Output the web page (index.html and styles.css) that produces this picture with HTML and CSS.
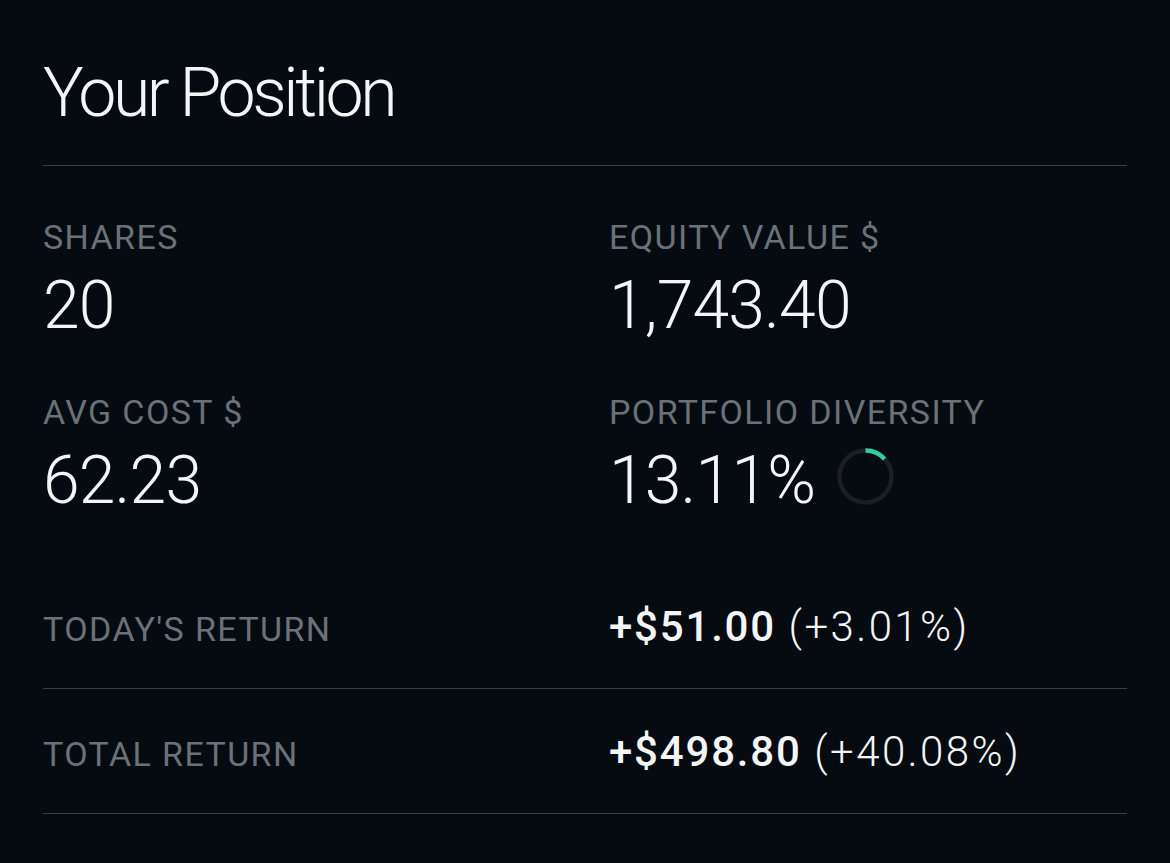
FILE: index.html
```html
<!DOCTYPE html>
<html lang="en">
<head>
<meta charset="utf-8">
<title>Your Position</title>
<link rel="stylesheet" href="styles.css">
</head>
<body>
<main class="position">
  <h1 class="title">Your Position</h1>
  <section class="stats">
    <div class="stat">
      <div class="label">SHARES</div>
      <div class="value">20</div>
    </div>
    <div class="stat">
      <div class="label">EQUITY VALUE $</div>
      <div class="value">1,743.40</div>
    </div>
    <div class="stat">
      <div class="label">AVG COST $</div>
      <div class="value">62.23</div>
    </div>
    <div class="stat">
      <div class="label">PORTFOLIO DIVERSITY</div>
      <div class="value value-ring">
        <span>13.11%</span>
        <svg class="ring" width="57" height="57" viewBox="0 0 57 57">
          <circle cx="28.5" cy="28.5" r="26" fill="none" stroke="#1b1e23" stroke-width="4.5"/>
          <circle cx="28.5" cy="28.5" r="26" fill="none" stroke="#2fcf9c" stroke-width="4.5"
            stroke-dasharray="21.4 200" transform="rotate(-90 28.5 28.5)"/>
        </svg>
      </div>
    </div>
  </section>
  <div class="return-row">
    <div class="label">TODAY'S RETURN</div>
    <div class="ret"><b>+$51.00</b> (+3.01%)</div>
  </div>
  <div class="return-row">
    <div class="label">TOTAL RETURN</div>
    <div class="ret"><b>+$498.80</b> (+40.08%)</div>
  </div>
</main>
</body>
</html>
```
FILE: styles.css
```css
html, body {
  margin: 0;
  background: #060b12;
}
body {
  font-family: Roboto, "Noto Sans", sans-serif;
  color: #f4f5f6;
}
.position {
  width: 1084px;
  margin-left: 43px;
  padding-top: 53px;
}
.title {
  margin: 0;
  font-size: 68px;
  font-weight: 300;
  line-height: 80px;
  padding-bottom: 32px;
  border-bottom: 1px solid #3a3d42;
  letter-spacing: -3.4px;
}
.stats {
  display: grid;
  grid-template-columns: 566px 1fr;
  row-gap: 51px;
  margin-top: 51px;
}
.stat {
  display: flex;
  flex-direction: column;
}
.label {
  font-size: 34px;
  line-height: 40px;
  font-weight: 400;
  color: #6b7178;
  letter-spacing: 1.4px;
}
.value {
  margin-top: 14px;
  font-size: 66px;
  line-height: 70px;
  font-weight: 300;
  letter-spacing: -0.8px;
}
.value-ring {
  display: flex;
  align-items: center;
  gap: 22px;
}
.ring {
  display: block;
  margin-top: -9px;
}
.stats + .return-row {
  margin-top: 48px;
}
.return-row {
  display: grid;
  grid-template-columns: 566px 1fr;
  align-items: baseline;
  padding: 38px 0 36px;
  border-bottom: 1px solid #3a3d42;
  box-sizing: border-box;
  height: 125px;
}
.ret {
  font-size: 42px;
  line-height: 50px;
  font-weight: 300;
  letter-spacing: 2.4px;
}
.ret b {
  font-weight: 500;
  letter-spacing: 1.8px;
}
```
